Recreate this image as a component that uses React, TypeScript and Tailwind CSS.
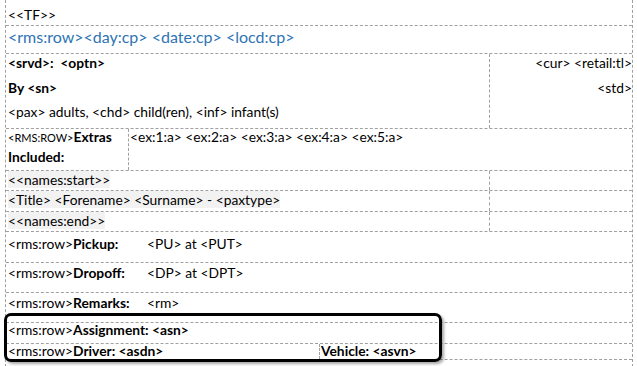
import type { ReactNode } from 'react'

const line = 'border-dashed border-[#a0a0a0]'

function Row({ h, children, last }: { h: string; children?: ReactNode; last?: boolean }) {
  return <div className={`flex ${h} ${last ? '' : `border-b ${line}`}`}>{children}</div>
}

function Shade({ children }: { children: ReactNode }) {
  return <span className="bg-[#f2f2f2]">{children}</span>
}

// label column for the pickup / dropoff / remarks rows
function Labeled({ label, value }: { label: string; value: string }) {
  return (
    <div className="flex pl-[2px] leading-[18px]">
      <span className="w-[139px]">
        &lt;rms:row&gt;<b>{label}</b>
      </span>
      <span>{value}</span>
    </div>
  )
}

export default function App() {
  return (
    <div
      className="relative h-[366px] w-[637px] overflow-hidden bg-white text-[13.8px] text-black"
      style={{ fontFamily: 'Lato, "Liberation Sans", sans-serif' }}
    >
      <div className={`ml-[5px] w-[628px] border-x ${line}`}>
        {/* template header */}
        <Row h="h-[26px]">
          <div className="pl-[2px] pt-[6px] leading-[18px]">&lt;&lt;TF&gt;&gt;</div>
        </Row>
        <Row h="h-[28px]">
          <div className="pl-[2px] text-[16px] leading-[22px] text-[#2e74b5]">
            &lt;rms:row&gt;&lt;day:cp&gt; &lt;date:cp&gt; &lt;locd:cp&gt;
          </div>
        </Row>

        {/* service + price */}
        <Row h="h-[75px]">
          <div className={`w-[484px] border-r ${line} pl-[2px] leading-[18px]`}>
            <div className="font-bold whitespace-pre">&lt;srvd&gt;:  &lt;optn&gt;</div>
            <div className="mt-[7px] font-bold">By &lt;sn&gt;</div>
            <div className="mt-[6px]">&lt;pax&gt; adults, &lt;chd&gt; child(ren), &lt;inf&gt; infant(s)</div>
          </div>
          <div className="flex-1 text-right leading-[18px]">
            <div>&lt;cur&gt; &lt;retail:tl&gt;</div>
            <div className="mt-[7px]">&lt;std&gt;</div>
          </div>
        </Row>

        {/* extras */}
        <Row h="h-[42px]">
          <div className={`w-[123px] border-r ${line} pl-[2px] leading-[16px]`}>
            <div>
              <span className="text-[11px] uppercase">&lt;rms:row&gt;</span>
              <b>Extras</b>
            </div>
            <div className="mt-[3px] font-bold">Included:</div>
          </div>
          <div className="flex-1 pl-[1px] leading-[16px]">
            &lt;ex:1:a&gt; &lt;ex:2:a&gt; &lt;ex:3:a&gt; &lt;ex:4:a&gt; &lt;ex:5:a&gt;
          </div>
        </Row>

        {/* passenger names */}
        <Row h="h-[20px]">
          <div className={`w-[484px] border-r ${line} pl-[2px] leading-[18px]`}>
            <Shade>&lt;&lt;names:start&gt;&gt;</Shade>
          </div>
        </Row>
        <Row h="h-[21px]">
          <div className={`w-[484px] border-r ${line} pl-[2px] leading-[18px]`}>
            <Shade>&lt;Title&gt; &lt;Forename&gt; &lt;Surname&gt; - &lt;paxtype&gt;</Shade>
          </div>
        </Row>
        <Row h="h-[20px]">
          <div className={`w-[484px] border-r ${line} pl-[2px] leading-[18px]`}>
            <Shade>&lt;&lt;names:end&gt;&gt;</Shade>
          </div>
        </Row>

        {/* transfer details */}
        <Row h="h-[31px]">
          <div className="pt-[3px]">
            <Labeled label="Pickup:" value="<PU> at <PUT>" />
          </div>
        </Row>
        <Row h="h-[30px]">
          <div className="pt-[1px]">
            <Labeled label="Dropoff:" value="<DP> at <DPT>" />
          </div>
        </Row>
        <Row h="h-[30px]">
          <div className="pt-[1px]">
            <Labeled label="Remarks:" value="<rm>" />
          </div>
        </Row>

        {/* assignment */}
        <Row h="h-[21px]">
          <div className="pl-[2px] leading-[14px]">
            &lt;rms:row&gt;<b>Assignment: &lt;asn&gt;</b>
          </div>
        </Row>
        <Row h="h-[16px]">
          <div className={`w-[314px] border-r ${line} pl-[2px] leading-[14px]`}>
            &lt;rms:row&gt;<b>Driver: &lt;asdn&gt;</b>
          </div>
          <div className="pl-[1px] font-bold leading-[14px]">Vehicle: &lt;asvn&gt;</div>
        </Row>
        <Row h="h-[7px]" last />
      </div>

      {/* callout around the assignment rows */}
      <div className="absolute left-[4px] top-[313px] h-[49px] w-[438px] rounded-[7px] border-[3px] border-black shadow-[2px_2px_3px_rgba(0,0,0,0.35)]" />
    </div>
  )
}
